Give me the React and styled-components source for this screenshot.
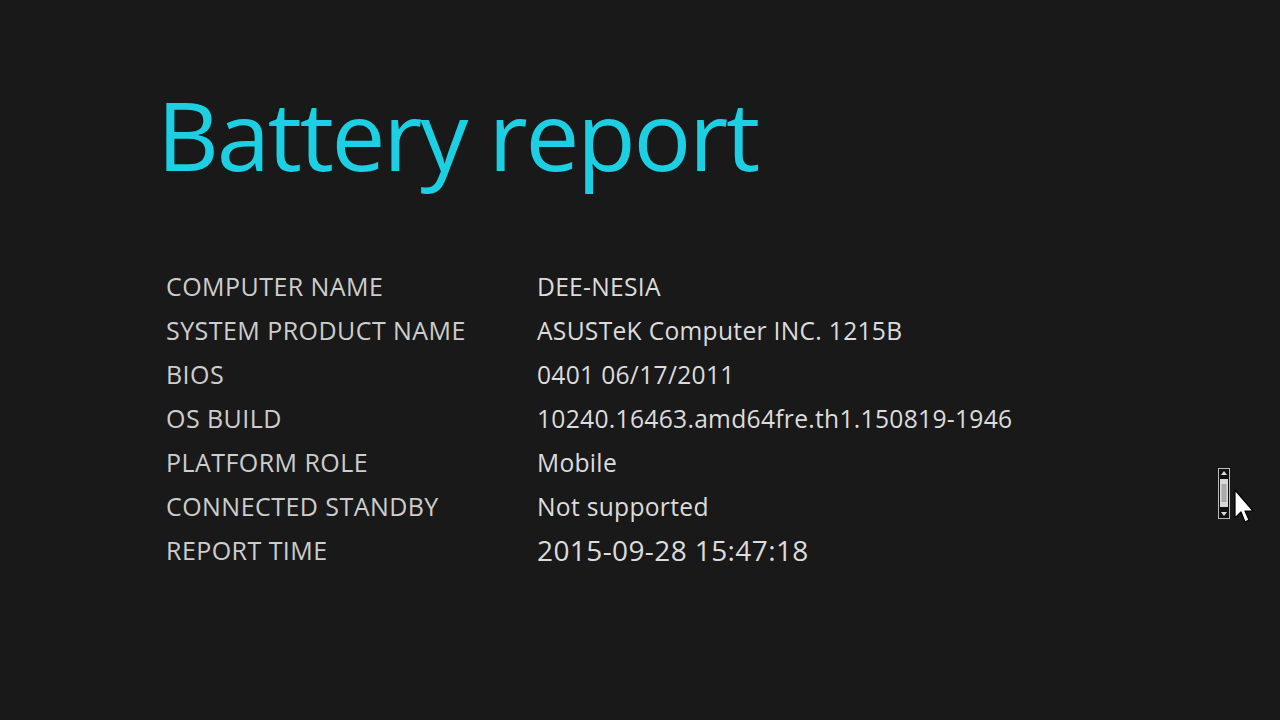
import React from "react";
import styled, { createGlobalStyle } from "styled-components";

const Global = createGlobalStyle`
  html, body { margin: 0; padding: 0; background: #191919; }
  body { font-family: "Open Sans", "Noto Sans", sans-serif; }
`;

const Page = styled.div`
  position: relative;
  width: 1280px;
  height: 720px;
  overflow: hidden;
  background: #191919;
  box-sizing: border-box;
  padding: 69px 0 0 157px;
`;

const Title = styled.h1`
  margin: 0;
  font-family: "Open Sans", "Noto Sans", sans-serif;
  font-weight: 400;
  font-size: 96px;
  line-height: 130px;
  color: #1ccfe3;
  letter-spacing: -2.3px;
`;

const Table = styled.div`
  display: grid;
  grid-template-columns: 371px auto;
  grid-auto-rows: 44px;
  margin-top: 65px;
  padding-left: 9px;
  align-items: center;
`;

const Label = styled.div`
  font-size: 25px;
  color: #cdcdcd;
  letter-spacing: 0.45px;
  white-space: nowrap;
`;

const Value = styled.div`
  font-size: ${(p) => (p.$big ? "28px" : "24.6px")};
  color: #dcdcdc;
  letter-spacing: ${(p) => (p.$big ? "0.4px" : "0.3px")};
  white-space: nowrap;
`;

const Cursor = styled.svg`
  position: absolute;
  left: 1216px;
  top: 466px;
`;

const rows = [
  ["COMPUTER NAME", "DEE-NESIA"],
  ["SYSTEM PRODUCT NAME", "ASUSTeK Computer INC. 1215B"],
  ["BIOS", "0401 06/17/2011"],
  ["OS BUILD", "10240.16463.amd64fre.th1.150819-1946"],
  ["PLATFORM ROLE", "Mobile"],
  ["CONNECTED STANDBY", "Not supported"],
  ["REPORT TIME", "2015-09-28 15:47:18", true],
];

export default function App() {
  return (
    <>
      <Global />
      <Page>
        <Title>Battery report</Title>
        <Table>
          {rows.map(([l, v, big]) => (
            <React.Fragment key={l}>
              <Label>{l}</Label>
              <Value $big={big}>{v}</Value>
            </React.Fragment>
          ))}
        </Table>
        <Cursor width="44" height="64" viewBox="0 0 44 64">
          <rect x="2.5" y="2.5" width="11" height="50" fill="#111" stroke="#bbb" strokeWidth="1" />
          <polygon points="8,5 5,9 11,9" fill="#ddd" />
          <polygon points="8,50 5,46 11,46" fill="#ddd" />
          <rect x="4" y="13" width="8" height="28" fill="#d8d8d8" />
          <rect x="5.5" y="18" width="5" height="18" fill="#aaa" />
          <polygon
            points="19,24 19,52 25,46 29,56 33,54 29,45 37,45"
            fill="#fff"
            stroke="#000"
            strokeWidth="1.2"
            strokeLinejoin="round"
          />
        </Cursor>
      </Page>
    </>
  );
}
